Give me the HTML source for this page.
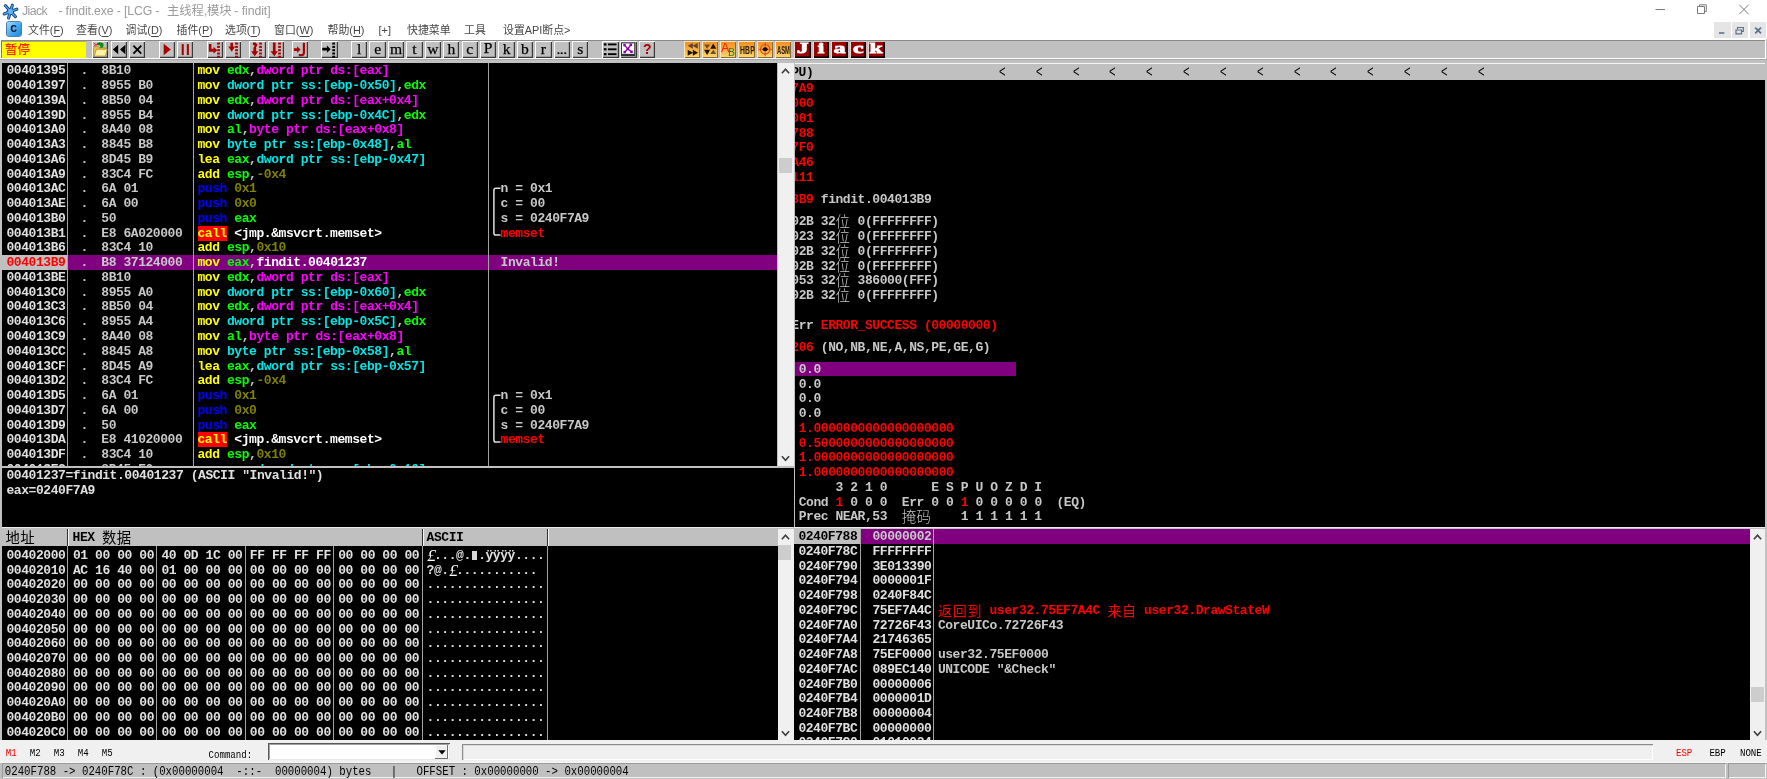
<!DOCTYPE html><html><head><meta charset="utf-8"><title>Jiack - findit.exe</title><style>
html,body{margin:0;padding:0}
body{width:1767px;height:779px;overflow:hidden;position:relative;background:#c0c0c0;font-family:"Liberation Sans","Noto Sans CJK SC",sans-serif}
.abs{position:absolute}
.m{position:absolute;white-space:pre;font:bold 13.0px/14.732px "Liberation Mono","Noto Sans CJK SC",monospace;letter-spacing:-0.4353px;height:14.732px;color:#e0e0e0;margin-top:1px}
.cj{font-family:"Noto Sans CJK SC",sans-serif;font-weight:300;font-size:14.4px;letter-spacing:0;display:inline-block;width:14.732px;text-align:center;line-height:14.732px;vertical-align:top;position:relative;top:-1.2px;text-indent:-0.5px}
.K .cj,.R .cj{font-weight:400}
.pane{position:absolute;background:#000;overflow:hidden}
.vl{position:absolute;width:1.2px;background:#a4a4a4}
.Y{color:#ffff00}.G{color:#00ff00}.M{color:#ff00ff}.C{color:#00e6e6}.B{color:#0000ff}.O{color:#808000}.W{color:#ffffff}.R{color:#ff0000}.L{color:#c8c8c8}.K{color:#000}
.call{background:#ff0000;color:#ffff00}
.sb{position:absolute;background:#f0f0f0}
.thumb{position:absolute;background:#cdcdcd}
.btn{position:absolute;top:41.2px;height:16.6px;width:16.4px;background:#c0c0c0;box-shadow:inset 1px 1px 0 #fbfbfb,inset -1.2px -1.2px 0 #383838;overflow:hidden}
.btn svg{position:absolute;left:0;top:0}
.lb{font:15.6px/16.5px "Liberation Serif",serif;-webkit-text-stroke:0.25px #000;color:#000;text-align:center}
.menu{position:absolute;top:21px;height:19px;line-height:19px;font-size:10.9px;color:#474747;white-space:pre}
.menu u{text-decoration:underline;text-underline-offset:1.5px;text-decoration-thickness:0.8px}
.hdr{position:absolute;background:#c0c0c0;overflow:hidden}
.pd{display:inline-block;width:7.366px;font:italic 400 17.5px/13.4px "Liberation Serif",serif;text-indent:0.6px;letter-spacing:0;vertical-align:top;color:#fff}
.blk{display:inline-block;width:4.6px;height:8.6px;margin:2.4px 1.4px 0 1.366px;background:#d8d8d8;vertical-align:top}
.st{position:absolute;white-space:pre;font:10.73px/17px "Liberation Mono",monospace;color:#000;transform:scaleY(1.27);transform-origin:0 0}
.sm{position:absolute;white-space:pre;font:9.1px/13px "Liberation Mono",monospace;transform:scaleY(1.25);transform-origin:0 0;letter-spacing:-0.02px}
</style></head><body><div id="app" style="will-change:transform;position:absolute;left:0;top:0;width:1767px;height:779px">
<div class="abs" style="left:0;top:0;width:1767px;height:38.5px;background:#fff"></div>
<svg class="abs" style="left:1.5px;top:1.5px" width="18" height="18" viewBox="0 0 18 18"><g stroke="#1b447e" stroke-width="3.1" stroke-linecap="round" fill="none"><path d="M8.4 9.4 L3.4 3.6"/><path d="M8.4 9.4 L10.4 3.2"/><path d="M8.4 9.4 L14.8 7.2"/><path d="M8.4 9.4 L2.2 12"/><path d="M8.4 9.4 L6.6 16"/><path d="M8.4 9.4 L13.4 14.6"/></g><circle cx="8.4" cy="9.4" r="3.7" fill="#1b447e"/><g stroke="#4c9fe6" stroke-width="1.4" stroke-linecap="round" fill="none"><path d="M8.4 9.4 L3.4 3.6"/><path d="M8.4 9.4 L10.4 3.2"/><path d="M8.4 9.4 L14.8 7.2"/><path d="M8.4 9.4 L2.2 12"/><path d="M8.4 9.4 L6.6 16"/><path d="M8.4 9.4 L13.4 14.6"/></g><circle cx="8.4" cy="9.4" r="2.6" fill="#5cb2f4"/></svg>
<div class="abs" style="left:22.1px;top:3px;height:17px;line-height:17px;font-size:12.3px;letter-spacing:-0.62px;color:#9b9b9b;white-space:pre">Jiack</div>
<div class="abs" style="left:58.4px;top:3px;height:17px;line-height:17px;font-size:12.3px;letter-spacing:-0.14px;color:#9b9b9b;white-space:pre">- findit.exe - [LCG -</div>
<div class="abs" style="left:167px;top:3px;height:17px;line-height:17px;font-size:12.3px;letter-spacing:0px;color:#9b9b9b;white-space:pre">主线程,</div>
<div class="abs" style="left:207px;top:3px;height:17px;line-height:17px;font-size:12.3px;letter-spacing:0px;color:#9b9b9b;white-space:pre">模块</div>
<div class="abs" style="left:234.3px;top:3px;height:17px;line-height:17px;font-size:12.3px;letter-spacing:-0.08px;color:#9b9b9b;white-space:pre">- findit]</div>
<svg class="abs" style="left:1640px;top:0" width="127" height="20" viewBox="0 0 127 20"><g stroke="#7a7a7a" stroke-width="1" fill="none"><path d="M15.5 9.5 H25"/><path d="M57.5 6.5 H64.5 V13.5 H57.5 Z"/><path d="M59.5 6.5 V4.8 H66.3 V11.5 H64.5"/><path d="M99.3 4.8 L108.6 14.2 M108.6 4.8 L99.3 14.2"/></g></svg>
<div class="abs" style="left:6.5px;top:22.3px;width:14.4px;height:14.2px;border-radius:2px;background:linear-gradient(135deg,#9adcff,#45a8ee 55%,#1f84d6);box-shadow:0 0 0 0.8px #1a5a96;"></div>
<div class="abs" style="left:6.5px;top:22.3px;width:14.4px;height:14.2px;text-align:center;font:bold 11.5px/14.5px 'Liberation Mono',monospace;color:#08152a">C</div>
<div class="menu" style="left:28px">文件(<u>F</u>)</div>
<div class="menu" style="left:76px">查看(<u>V</u>)</div>
<div class="menu" style="left:125.5px">调试(<u>D</u>)</div>
<div class="menu" style="left:176.5px">插件(<u>P</u>)</div>
<div class="menu" style="left:225px">选项(<u>T</u>)</div>
<div class="menu" style="left:274px">窗口(<u>W</u>)</div>
<div class="menu" style="left:327.5px">帮助(<u>H</u>)</div>
<div class="menu" style="left:378.5px">[+]</div>
<div class="menu" style="left:407px">快捷菜单</div>
<div class="menu" style="left:464px">工具</div>
<div class="menu" style="left:503px">设置API断点&gt;</div>
<div class="abs" style="left:1714.3px;top:22px;width:16.3px;height:16.3px;background:#e5e5e5"></div>
<div class="abs" style="left:1732.2px;top:22px;width:16.3px;height:16.3px;background:#e5e5e5"></div>
<div class="abs" style="left:1750px;top:22px;width:16.3px;height:16.3px;background:#e5e5e5"></div>
<svg class="abs" style="left:1714px;top:22px" width="53" height="17" viewBox="0 0 53 17"><g stroke="#5b6f8f" fill="none"><path d="M5 11 H10.3" stroke-width="1.6"/><path d="M23.5 7.2 V5.5 H29.3 V9.5 H27.5 M22 8 H27.5 V11.8 H22 Z" stroke-width="1.2"/><path d="M41.2 5.6 L47 11.4 M47 5.6 L41.2 11.4" stroke-width="1.7"/></g></svg>
<div class="abs" style="left:0;top:38.5px;width:1766px;height:20.5px;background:#c0c0c0;box-shadow:inset 0 1px 0 #fff, inset 0 -1px 0 #fff, inset -1px 0 0 #fff"></div>
<div class="abs" style="left:0;top:40px;width:1765px;height:1px;background:#8a8a8a"></div>
<div class="abs" style="left:0;top:59.3px;width:1767px;height:1px;background:#a8a8a8"></div>
<div class="abs" style="left:0;top:39px;width:1px;height:20px;background:#fff"></div>
<div class="abs" style="left:1.8px;top:41.4px;width:84px;height:16.9px;background:#ffff00;box-shadow:inset 0 1px 0 #b0b060,-1px 0 0 #77778a"></div>
<div class="abs" style="left:5px;top:41.4px;height:17px;line-height:16.5px;font-family:'Noto Sans CJK SC',sans-serif;font-size:12.4px;font-weight:500;color:#ff2000;white-space:pre">暂停</div>
<div class="btn " style="left:92.0px;"><svg width="16.4" height="16.6" viewBox="0 0 16 16" preserveAspectRatio="none"><path d="M1.5 7 L2.5 5.5 H6 L7 6.5 H13 V8 H4.5 L2.5 14 H1.5 Z" fill="#e8c050" stroke="#a88420" stroke-width="0.6"/><path d="M4.3 8 H15 L12.8 14.5 H2.2 Z" fill="#fff2a0" stroke="#b89028" stroke-width="0.7"/><path d="M4.5 3.5 C5 1 8 0.8 10 1.8 C12 2.6 11.5 5.5 10.3 6.6 L7.5 6.6 C9 5 8 4 6.5 4.2 Z" fill="#109010"/><path d="M1.5 1.8 L4.8 4.2 M1.8 4.8 L5 3.2" stroke="#ff2020" stroke-width="0.9"/><circle cx="7.2" cy="2.6" r="0.6" fill="#003000"/></svg></div>
<div class="btn " style="left:110.7px;"><svg width="16.4" height="16.6" viewBox="0 0 16 16" preserveAspectRatio="none"><path d="M1.8 8.2 L7 3.6 V12.8 Z M8.8 8.2 L14 3.6 V12.8 Z" fill="#000"/></svg></div>
<div class="btn " style="left:129.1px;"><svg width="16.4" height="16.6" viewBox="0 0 16 16" preserveAspectRatio="none"><path d="M4.3 4.4 L12 12.2 M12 4.4 L4.3 12.2" stroke="#000" stroke-width="1.8" fill="none"/></svg></div>
<div class="btn " style="left:158.7px;"><svg width="16.4" height="16.6" viewBox="0 0 16 16" preserveAspectRatio="none"><path d="M4.6 2.6 L11.5 8.2 L4.6 13.8 Z" fill="#aa0000"/></svg></div>
<div class="btn " style="left:177.1px;"><svg width="16.4" height="16.6" viewBox="0 0 16 16" preserveAspectRatio="none"><rect x="4.6" y="3" width="2" height="10.6" fill="#aa0000"/><rect x="9.6" y="3" width="2" height="10.6" fill="#aa0000"/></svg></div>
<div class="btn " style="left:207.0px;"><svg width="16.4" height="16.6" viewBox="0 0 16 16" preserveAspectRatio="none"><path d="M1.8 3 H4.3 V7.5 H6.4 V5.6 L10 8.9 L6.4 12.2 V10.3 H1.8 Z" fill="#aa0000"/><rect x="9.9" y="1.5" width="2.7" height="1.95" fill="#aa0000"/><rect x="9.9" y="4.7" width="2.7" height="1.95" fill="#aa0000"/><rect x="9.9" y="7.9" width="2.7" height="1.95" fill="#aa0000"/><rect x="9.9" y="11.1" width="2.7" height="1.95" fill="#aa0000"/><rect x="9.9" y="14.2" width="2.7" height="1.95" fill="#aa0000"/></svg></div>
<div class="btn " style="left:225.0px;"><svg width="16.4" height="16.6" viewBox="0 0 16 16" preserveAspectRatio="none"><path d="M5.3 1.6 H7.8 V5.4 H9.9 L6.55 10.3 L3.2 5.4 H5.3 Z" fill="#aa0000"/><rect x="9.9" y="1.5" width="2.7" height="1.95" fill="#aa0000"/><rect x="9.9" y="4.7" width="2.7" height="1.95" fill="#aa0000"/><rect x="9.9" y="7.9" width="2.7" height="1.95" fill="#aa0000"/><rect x="9.9" y="11.1" width="2.7" height="1.95" fill="#aa0000"/><rect x="9.9" y="14.2" width="2.7" height="1.95" fill="#aa0000"/></svg></div>
<div class="btn " style="left:249.2px;"><svg width="16.4" height="16.6" viewBox="0 0 16 16" preserveAspectRatio="none"><path d="M3.8 1.4 H6.4 L8.4 3.6 L6.6 6.6 H7 V9.8 H9.2 L5.6 14.6 L2 9.8 H4.3 V6.8 L5.5 4.4 L3.8 3.6 Z" fill="#aa0000"/><rect x="9.9" y="1.5" width="2.7" height="1.95" fill="#aa0000"/><rect x="9.9" y="4.7" width="2.7" height="1.95" fill="#aa0000"/><rect x="9.9" y="7.9" width="2.7" height="1.95" fill="#aa0000"/><rect x="9.9" y="11.1" width="2.7" height="1.95" fill="#aa0000"/><rect x="9.9" y="14.2" width="2.7" height="1.95" fill="#aa0000"/></svg></div>
<div class="btn " style="left:267.7px;"><svg width="16.4" height="16.6" viewBox="0 0 16 16" preserveAspectRatio="none"><path d="M4.8 1.4 H7.4 V10 H9.7 L6.1 14.8 L2.5 10 H4.8 Z" fill="#aa0000"/><rect x="9.9" y="1.5" width="2.7" height="1.95" fill="#aa0000"/><rect x="9.9" y="4.7" width="2.7" height="1.95" fill="#aa0000"/><rect x="9.9" y="7.9" width="2.7" height="1.95" fill="#aa0000"/><rect x="9.9" y="11.1" width="2.7" height="1.95" fill="#aa0000"/><rect x="9.9" y="14.2" width="2.7" height="1.95" fill="#aa0000"/></svg></div>
<div class="btn " style="left:291.9px;"><svg width="16.4" height="16.6" viewBox="0 0 16 16" preserveAspectRatio="none"><path d="M1.9 7 H5 V5 L8.4 8.3 L5 11.6 V9.6 H1.9 Z" fill="#aa0000"/><path d="M11.6 1.8 V11.4 Q11.6 13.7 9.4 13.7 H6.6" stroke="#aa0000" stroke-width="2.1" fill="none"/></svg></div>
<div class="btn " style="left:321.4px;"><svg width="16.4" height="16.6" viewBox="0 0 16 16" preserveAspectRatio="none"><path d="M1.2 6.6 H5.8 V4.4 L9.4 7.9 L5.8 11.4 V9.2 H1.2 Z" fill="#000"/><rect x="11" y="1.5" width="2.7" height="1.95" fill="#000"/><rect x="11" y="4.7" width="2.7" height="1.95" fill="#000"/><rect x="11" y="7.9" width="2.7" height="1.95" fill="#000"/><rect x="11" y="11.1" width="2.7" height="1.95" fill="#000"/><rect x="11" y="14.2" width="2.7" height="1.95" fill="#000"/></svg></div>
<div class="btn lb" style="left:351.0px;">l</div>
<div class="btn lb" style="left:369.42px;">e</div>
<div class="btn lb" style="left:387.84px;">m</div>
<div class="btn lb" style="left:406.26px;">t</div>
<div class="btn lb" style="left:424.68px;">w</div>
<div class="btn lb" style="left:443.1px;">h</div>
<div class="btn lb" style="left:461.52px;">c</div>
<div class="btn lb" style="left:479.94px;line-height:13.6px">P</div>
<div class="btn lb" style="left:498.36px;">k</div>
<div class="btn lb" style="left:516.78px;">b</div>
<div class="btn lb" style="left:535.2px;">r</div>
<div class="btn lb" style="left:553.62px;letter-spacing:-0.5px;text-indent:-0.5px">...</div>
<div class="btn lb" style="left:572.04px;">s</div>
<div class="btn " style="left:602.3px;"><svg width="16.4" height="16.6" viewBox="0 0 16 16" preserveAspectRatio="none"><rect x="1.8" y="2.2" width="2.6" height="2.2" fill="#000"/><rect x="5.8" y="2.4000000000000004" width="8.4" height="1.8" fill="#000"/><rect x="1.8" y="6.9" width="2.6" height="2.2" fill="#000"/><rect x="5.8" y="7.1000000000000005" width="8.4" height="1.8" fill="#000"/><rect x="1.8" y="11.6" width="2.6" height="2.2" fill="#000"/><rect x="5.8" y="11.799999999999999" width="8.4" height="1.8" fill="#000"/></svg></div>
<div class="btn " style="left:620.4px;"><svg width="16.4" height="16.6" viewBox="0 0 16 16" preserveAspectRatio="none"><rect x="1.4" y="1.8" width="13" height="12.2" fill="#fff" stroke="#303030" stroke-width="1"/><rect x="1.4" y="12.4" width="13" height="1.6" fill="#303030"/><path d="M4.4 4 L7.6 7.6 L4.6 10.8 M7.6 7.6 L11.4 10.6 M10.6 3.6 L7.6 7.6" stroke="#a000b0" stroke-width="1.3" fill="none"/><rect x="3.2" y="2.8" width="2.4" height="2.4" fill="#9000a8"/><rect x="9.4" y="2.4000000000000004" width="2.4" height="2.4" fill="#9000a8"/><rect x="6.3999999999999995" y="6.3999999999999995" width="2.4" height="2.4" fill="#9000a8"/><rect x="3.3999999999999995" y="9.4" width="2.4" height="2.4" fill="#9000a8"/><rect x="10.0" y="9.200000000000001" width="2.4" height="2.4" fill="#9000a8"/></svg></div>
<div class="btn " style="left:639.0px;font:bold 14px/16.6px 'Liberation Sans',sans-serif;color:#a80000;text-align:center">?</div>
<div class="btn " style="left:683.5px;background:linear-gradient(180deg,#f08c20 0%,#f7a838 40%,#ffd870 100%);box-shadow:inset 1px 1px 0 #ffe6b0,inset -1px -1px 0 #8a6a30"><svg width="16.4" height="16.6" viewBox="0 0 16 16" preserveAspectRatio="none"><path d="M8.6 2 L3.6 4.7 L8.6 7.4 Z M13.4 2 L8.4 4.7 L13.4 7.4 Z" fill="#5a4630"/><path d="M3.6 8.4 L8.8 11.3 L3.6 14.2 Z M8.6 8.4 L13.8 11.3 L8.6 14.2 Z" fill="#1c1408"/></svg></div>
<div class="btn " style="left:701.6px;background:linear-gradient(180deg,#f08c20 0%,#f7a838 40%,#ffd870 100%);box-shadow:inset 1px 1px 0 #ffe6b0,inset -1px -1px 0 #8a6a30"><svg width="16.4" height="16.6" viewBox="0 0 16 16" preserveAspectRatio="none"><path d="M2 3.4 L5 7.4 L8 3.4 Z" fill="#6a5030"/><path d="M2 8.4 L5 13.4 L8 8.4 Z" fill="#1c1408"/><path d="M8 7.4 L11 2.4 L14 7.4 Z" fill="#1c1408"/><path d="M8 12.6 L11 8.4 L14 12.6 Z" fill="#6a5030"/></svg></div>
<div class="btn " style="left:719.7px;background:linear-gradient(180deg,#f08c20 0%,#f7a838 40%,#ffd870 100%);box-shadow:inset 1px 1px 0 #ffe6b0,inset -1px -1px 0 #8a6a30"><span style="position:absolute;left:1.2px;top:0.6px;font:12.5px/13px 'Liberation Sans',sans-serif;color:#ff1a1a">A</span><span style="position:absolute;left:8.2px;top:5.2px;font:10.5px/12px 'Liberation Sans',sans-serif;color:#0a8a2a">B</span></div>
<div class="btn " style="left:738.4px;background:linear-gradient(180deg,#f08c20 0%,#f7a838 40%,#ffd870 100%);box-shadow:inset 1px 1px 0 #ffe6b0,inset -1px -1px 0 #8a6a30"><span style="position:absolute;left:1.3px;top:1.2px;font:bold 9.5px/13px 'Liberation Sans',sans-serif;color:#2a2210;transform:scale(0.72,1.15);transform-origin:0 0;letter-spacing:0.2px">HBP</span></div>
<div class="btn " style="left:756.5px;background:linear-gradient(180deg,#f08c20 0%,#f7a838 40%,#ffd870 100%);box-shadow:inset 1px 1px 0 #ffe6b0,inset -1px -1px 0 #8a6a30"><svg width="16.4" height="16.6" viewBox="0 0 16 16" preserveAspectRatio="none"><circle cx="8" cy="8" r="4.6" fill="none" stroke="#d8481c" stroke-width="1.1"/><path d="M8 1.2 V14.8 M1.2 8 H14.8" stroke="#d8481c" stroke-width="0.9"/><ellipse cx="8" cy="8" rx="2.5" ry="2" fill="#1a0c04"/></svg></div>
<div class="btn " style="left:775.0px;background:linear-gradient(180deg,#f08c20 0%,#f7a838 40%,#ffd870 100%);box-shadow:inset 1px 1px 0 #ffe6b0,inset -1px -1px 0 #8a6a30"><span style="position:absolute;left:1.6px;top:1.2px;font:bold 9.5px/13px 'Liberation Sans',sans-serif;color:#2a2210;transform:scale(0.61,1.15);transform-origin:0 0">ASM</span></div>
<div class="btn " style="left:794.4px;background:#9a0000;box-shadow:inset 0 1px 0 #c8c8c8,inset 1px 0 0 #e8d8d8,inset -1.6px -1.6px 0 #000;color:#fff;text-align:center;font:bold 14.5px/14.8px 'Liberation Serif',serif"><span style="display:inline-block;transform:scaleX(1.62);-webkit-text-stroke:0.8px #fff">J</span></div>
<div class="btn " style="left:812.85px;background:#9a0000;box-shadow:inset 0 1px 0 #c8c8c8,inset 1px 0 0 #e8d8d8,inset -1.6px -1.6px 0 #000;color:#fff;text-align:center;font:bold 14.5px/14.8px 'Liberation Serif',serif"><span style="display:inline-block;transform:scaleX(1.62);-webkit-text-stroke:0.8px #fff">i</span></div>
<div class="btn " style="left:831.3px;background:#9a0000;box-shadow:inset 0 1px 0 #c8c8c8,inset 1px 0 0 #e8d8d8,inset -1.6px -1.6px 0 #000;color:#fff;text-align:center;font:bold 14.5px/14.8px 'Liberation Serif',serif"><span style="display:inline-block;transform:scaleX(1.62);-webkit-text-stroke:0.8px #fff">a</span></div>
<div class="btn " style="left:849.75px;background:#9a0000;box-shadow:inset 0 1px 0 #c8c8c8,inset 1px 0 0 #e8d8d8,inset -1.6px -1.6px 0 #000;color:#fff;text-align:center;font:bold 14.5px/14.8px 'Liberation Serif',serif"><span style="display:inline-block;transform:scaleX(1.62);-webkit-text-stroke:0.8px #fff">c</span></div>
<div class="btn " style="left:868.2px;background:#9a0000;box-shadow:inset 0 1px 0 #c8c8c8,inset 1px 0 0 #e8d8d8,inset -1.6px -1.6px 0 #000;color:#fff;text-align:center;font:bold 14.5px/14.8px 'Liberation Serif',serif"><span style="display:inline-block;transform:scaleX(1.62);-webkit-text-stroke:0.8px #fff">k</span></div>
<div class="pane" style="left:2px;top:62.5px;width:775.2px;height:403.4px">
<div class="m " style="left:4.50px;top:0.75px">00401395</div>
<div class="m L" style="left:78.60px;top:0.75px">.</div>
<div class="m L" style="left:99.30px;top:0.75px">8B10</div>
<div class="m" style="left:195.50px;top:0.75px"><span class="Y">mov</span> <span class="G">edx</span><span class="L">,</span><span class="M">dword ptr ds:[eax]</span></div>
<div class="m " style="left:4.50px;top:15.52px">00401397</div>
<div class="m L" style="left:78.60px;top:15.52px">.</div>
<div class="m L" style="left:99.30px;top:15.52px">8955 B0</div>
<div class="m" style="left:195.50px;top:15.52px"><span class="Y">mov</span> <span class="C">dword ptr ss:[ebp-0x50]</span><span class="L">,</span><span class="G">edx</span></div>
<div class="m " style="left:4.50px;top:30.28px">0040139A</div>
<div class="m L" style="left:78.60px;top:30.28px">.</div>
<div class="m L" style="left:99.30px;top:30.28px">8B50 04</div>
<div class="m" style="left:195.50px;top:30.28px"><span class="Y">mov</span> <span class="G">edx</span><span class="L">,</span><span class="M">dword ptr ds:[eax+0x4]</span></div>
<div class="m " style="left:4.50px;top:45.05px">0040139D</div>
<div class="m L" style="left:78.60px;top:45.05px">.</div>
<div class="m L" style="left:99.30px;top:45.05px">8955 B4</div>
<div class="m" style="left:195.50px;top:45.05px"><span class="Y">mov</span> <span class="C">dword ptr ss:[ebp-0x4C]</span><span class="L">,</span><span class="G">edx</span></div>
<div class="m " style="left:4.50px;top:59.81px">004013A0</div>
<div class="m L" style="left:78.60px;top:59.81px">.</div>
<div class="m L" style="left:99.30px;top:59.81px">8A40 08</div>
<div class="m" style="left:195.50px;top:59.81px"><span class="Y">mov</span> <span class="G">al</span><span class="L">,</span><span class="M">byte ptr ds:[eax+0x8]</span></div>
<div class="m " style="left:4.50px;top:74.58px">004013A3</div>
<div class="m L" style="left:78.60px;top:74.58px">.</div>
<div class="m L" style="left:99.30px;top:74.58px">8845 B8</div>
<div class="m" style="left:195.50px;top:74.58px"><span class="Y">mov</span> <span class="C">byte ptr ss:[ebp-0x48]</span><span class="L">,</span><span class="G">al</span></div>
<div class="m " style="left:4.50px;top:89.34px">004013A6</div>
<div class="m L" style="left:78.60px;top:89.34px">.</div>
<div class="m L" style="left:99.30px;top:89.34px">8D45 B9</div>
<div class="m" style="left:195.50px;top:89.34px"><span class="Y">lea</span> <span class="G">eax</span><span class="L">,</span><span class="C">dword ptr ss:[ebp-0x47]</span></div>
<div class="m " style="left:4.50px;top:104.11px">004013A9</div>
<div class="m L" style="left:78.60px;top:104.11px">.</div>
<div class="m L" style="left:99.30px;top:104.11px">83C4 FC</div>
<div class="m" style="left:195.50px;top:104.11px"><span class="Y">add</span> <span class="G">esp</span><span class="L">,</span><span class="O">-0x4</span></div>
<div class="m " style="left:4.50px;top:118.87px">004013AC</div>
<div class="m L" style="left:78.60px;top:118.87px">.</div>
<div class="m L" style="left:99.30px;top:118.87px">6A 01</div>
<div class="m" style="left:195.50px;top:118.87px"><span class="B">push</span> <span class="O">0x1</span></div>
<div class="m" style="left:498.60px;top:118.87px"><span class="L">n = 0x1</span></div>
<div class="m " style="left:4.50px;top:133.63px">004013AE</div>
<div class="m L" style="left:78.60px;top:133.63px">.</div>
<div class="m L" style="left:99.30px;top:133.63px">6A 00</div>
<div class="m" style="left:195.50px;top:133.63px"><span class="B">push</span> <span class="O">0x0</span></div>
<div class="m" style="left:498.60px;top:133.63px"><span class="L">c = 00</span></div>
<div class="m " style="left:4.50px;top:148.40px">004013B0</div>
<div class="m L" style="left:78.60px;top:148.40px">.</div>
<div class="m L" style="left:99.30px;top:148.40px">50</div>
<div class="m" style="left:195.50px;top:148.40px"><span class="B">push</span> <span class="G">eax</span></div>
<div class="m" style="left:498.60px;top:148.40px"><span class="L">s = 0240F7A9</span></div>
<div class="m " style="left:4.50px;top:163.17px">004013B1</div>
<div class="m L" style="left:78.60px;top:163.17px">.</div>
<div class="m L" style="left:99.30px;top:163.17px">E8 6A020000</div>
<div class="m" style="left:195.50px;top:163.17px"><span class="call">call</span> <span class="W">&lt;jmp.&amp;msvcrt.memset&gt;</span></div>
<div class="m" style="left:498.60px;top:163.17px"><span class="R">memset</span></div>
<div class="m " style="left:4.50px;top:177.93px">004013B6</div>
<div class="m L" style="left:78.60px;top:177.93px">.</div>
<div class="m L" style="left:99.30px;top:177.93px">83C4 10</div>
<div class="m" style="left:195.50px;top:177.93px"><span class="Y">add</span> <span class="G">esp</span><span class="L">,</span><span class="O">0x10</span></div>
<div class="abs" style="left:-2px;top:192.69px;width:67.3px;height:14.732px;background:#c0c0c0"></div>
<div class="abs" style="left:65.8px;top:192.69px;width:775.2px;height:14.732px;background:#800080"></div>
<div class="m R" style="left:4.50px;top:192.69px">004013B9</div>
<div class="m L" style="left:78.60px;top:192.69px">.</div>
<div class="m L" style="left:99.30px;top:192.69px">B8 37124000</div>
<div class="m" style="left:195.50px;top:192.69px"><span class="Y">mov</span> <span class="G">eax</span><span class="L">,</span><span class="W">findit.00401237</span></div>
<div class="m" style="left:498.60px;top:192.69px"><span class="L">Invalid!</span></div>
<div class="m " style="left:4.50px;top:207.46px">004013BE</div>
<div class="m L" style="left:78.60px;top:207.46px">.</div>
<div class="m L" style="left:99.30px;top:207.46px">8B10</div>
<div class="m" style="left:195.50px;top:207.46px"><span class="Y">mov</span> <span class="G">edx</span><span class="L">,</span><span class="M">dword ptr ds:[eax]</span></div>
<div class="m " style="left:4.50px;top:222.23px">004013C0</div>
<div class="m L" style="left:78.60px;top:222.23px">.</div>
<div class="m L" style="left:99.30px;top:222.23px">8955 A0</div>
<div class="m" style="left:195.50px;top:222.23px"><span class="Y">mov</span> <span class="C">dword ptr ss:[ebp-0x60]</span><span class="L">,</span><span class="G">edx</span></div>
<div class="m " style="left:4.50px;top:236.99px">004013C3</div>
<div class="m L" style="left:78.60px;top:236.99px">.</div>
<div class="m L" style="left:99.30px;top:236.99px">8B50 04</div>
<div class="m" style="left:195.50px;top:236.99px"><span class="Y">mov</span> <span class="G">edx</span><span class="L">,</span><span class="M">dword ptr ds:[eax+0x4]</span></div>
<div class="m " style="left:4.50px;top:251.75px">004013C6</div>
<div class="m L" style="left:78.60px;top:251.75px">.</div>
<div class="m L" style="left:99.30px;top:251.75px">8955 A4</div>
<div class="m" style="left:195.50px;top:251.75px"><span class="Y">mov</span> <span class="C">dword ptr ss:[ebp-0x5C]</span><span class="L">,</span><span class="G">edx</span></div>
<div class="m " style="left:4.50px;top:266.52px">004013C9</div>
<div class="m L" style="left:78.60px;top:266.52px">.</div>
<div class="m L" style="left:99.30px;top:266.52px">8A40 08</div>
<div class="m" style="left:195.50px;top:266.52px"><span class="Y">mov</span> <span class="G">al</span><span class="L">,</span><span class="M">byte ptr ds:[eax+0x8]</span></div>
<div class="m " style="left:4.50px;top:281.29px">004013CC</div>
<div class="m L" style="left:78.60px;top:281.29px">.</div>
<div class="m L" style="left:99.30px;top:281.29px">8845 A8</div>
<div class="m" style="left:195.50px;top:281.29px"><span class="Y">mov</span> <span class="C">byte ptr ss:[ebp-0x58]</span><span class="L">,</span><span class="G">al</span></div>
<div class="m " style="left:4.50px;top:296.05px">004013CF</div>
<div class="m L" style="left:78.60px;top:296.05px">.</div>
<div class="m L" style="left:99.30px;top:296.05px">8D45 A9</div>
<div class="m" style="left:195.50px;top:296.05px"><span class="Y">lea</span> <span class="G">eax</span><span class="L">,</span><span class="C">dword ptr ss:[ebp-0x57]</span></div>
<div class="m " style="left:4.50px;top:310.81px">004013D2</div>
<div class="m L" style="left:78.60px;top:310.81px">.</div>
<div class="m L" style="left:99.30px;top:310.81px">83C4 FC</div>
<div class="m" style="left:195.50px;top:310.81px"><span class="Y">add</span> <span class="G">esp</span><span class="L">,</span><span class="O">-0x4</span></div>
<div class="m " style="left:4.50px;top:325.58px">004013D5</div>
<div class="m L" style="left:78.60px;top:325.58px">.</div>
<div class="m L" style="left:99.30px;top:325.58px">6A 01</div>
<div class="m" style="left:195.50px;top:325.58px"><span class="B">push</span> <span class="O">0x1</span></div>
<div class="m" style="left:498.60px;top:325.58px"><span class="L">n = 0x1</span></div>
<div class="m " style="left:4.50px;top:340.35px">004013D7</div>
<div class="m L" style="left:78.60px;top:340.35px">.</div>
<div class="m L" style="left:99.30px;top:340.35px">6A 00</div>
<div class="m" style="left:195.50px;top:340.35px"><span class="B">push</span> <span class="O">0x0</span></div>
<div class="m" style="left:498.60px;top:340.35px"><span class="L">c = 00</span></div>
<div class="m " style="left:4.50px;top:355.11px">004013D9</div>
<div class="m L" style="left:78.60px;top:355.11px">.</div>
<div class="m L" style="left:99.30px;top:355.11px">50</div>
<div class="m" style="left:195.50px;top:355.11px"><span class="B">push</span> <span class="G">eax</span></div>
<div class="m" style="left:498.60px;top:355.11px"><span class="L">s = 0240F7A9</span></div>
<div class="m " style="left:4.50px;top:369.88px">004013DA</div>
<div class="m L" style="left:78.60px;top:369.88px">.</div>
<div class="m L" style="left:99.30px;top:369.88px">E8 41020000</div>
<div class="m" style="left:195.50px;top:369.88px"><span class="call">call</span> <span class="W">&lt;jmp.&amp;msvcrt.memset&gt;</span></div>
<div class="m" style="left:498.60px;top:369.88px"><span class="R">memset</span></div>
<div class="m " style="left:4.50px;top:384.64px">004013DF</div>
<div class="m L" style="left:78.60px;top:384.64px">.</div>
<div class="m L" style="left:99.30px;top:384.64px">83C4 10</div>
<div class="m" style="left:195.50px;top:384.64px"><span class="Y">add</span> <span class="G">esp</span><span class="L">,</span><span class="O">0x10</span></div>
<div class="m " style="left:4.50px;top:399.41px">004013E2</div>
<div class="m L" style="left:78.60px;top:399.41px">.</div>
<div class="m L" style="left:99.30px;top:399.41px">8B45 E0</div>
<div class="m" style="left:195.50px;top:399.41px"><span class="Y">mov</span> <span class="G">eax</span><span class="L">,</span><span class="C">dword ptr ss:[ebp-0x10]</span></div>
<div class="vl" style="left:65.1px;top:0;height:403.4px"></div>
<div class="vl" style="left:191.1px;top:0;height:403.4px"></div>
<div class="vl" style="left:486.2px;top:0;height:403.4px"></div>
<svg class="abs" style="left:489px;top:123.67px" width="12" height="51.10" viewBox="0 0 12 51.10"><path d="M9.5 2.2 H5 Q2.9 2.2 2.9 4.4 V46.90 Q2.9 49.10 5 49.10 H9.5" stroke="#e0e0e0" stroke-width="1.5" fill="none"/></svg>
<svg class="abs" style="left:489px;top:330.38px" width="12" height="51.09" viewBox="0 0 12 51.09"><path d="M9.5 2.2 H5 Q2.9 2.2 2.9 4.4 V46.89 Q2.9 49.09 5 49.09 H9.5" stroke="#e0e0e0" stroke-width="1.5" fill="none"/></svg>
</div>
<div class="sb" style="left:777.5px;top:62.5px;width:16px;height:403.5px"></div>
<div class="thumb" style="left:779.2px;top:157.7px;width:13px;height:15.2px"></div>
<svg class="abs" style="left:780.8px;top:67px" width="9" height="8.4" viewBox="0 0 9 8.4"><path d="M0.9 6.2 L4.5 2.2 L8.1 6.2" stroke="#404040" stroke-width="1.7" fill="none"/></svg>
<svg class="abs" style="left:780.8px;top:454.2px" width="9" height="8.4" viewBox="0 0 9 8.4"><path d="M0.9 2.2 L4.5 6.2 L8.1 2.2" stroke="#404040" stroke-width="1.7" fill="none"/></svg>
<div class="pane" style="left:2px;top:468px;width:791.5px;height:59px">
<div class="m" style="left:4.5px;top:0.2px">00401237=findit.00401237 (ASCII "Invalid!")</div>
<div class="m" style="left:4.5px;top:14.93px">eax=0240F7A9</div>
</div>
<div class="hdr" style="left:2px;top:528.5px;width:775.5px;height:17.8px">
<div class="m K" style="left:3.6px;top:1.6px"><span class="cj" style="">地</span><span class="cj" style="">址</span></div>
<div class="m K" style="left:70.6px;top:1.6px">HEX <span class="cj" style="">数</span><span class="cj" style="">据</span></div>
<div class="m K" style="left:424.6px;top:1.6px">ASCII</div>
<div class="abs" style="left:64.9px;top:0;width:1.2px;height:18px;background:#303030"></div>
<div class="abs" style="left:66.1px;top:0;width:1px;height:18px;background:#f4f4f4"></div>
<div class="abs" style="left:419.9px;top:0;width:1.2px;height:18px;background:#303030"></div>
<div class="abs" style="left:421.1px;top:0;width:1px;height:18px;background:#f4f4f4"></div>
<div class="abs" style="left:544.9px;top:0;width:1.2px;height:18px;background:#303030"></div>
<div class="abs" style="left:546.1px;top:0;width:1px;height:18px;background:#f4f4f4"></div>
</div>
<div class="abs" style="left:2px;top:527.3px;width:791px;height:1.2px;background:#ececec"></div>
<div class="pane" style="left:2px;top:546.3px;width:775.5px;height:193.70000000000005px">
<div class="m" style="left:4.5px;top:1.60px">00402000</div>
<div class="m" style="left:71px;top:1.60px">01 00 00 00 40 0D 1C 00 FF FF FF FF 00 00 00 00</div>
<div class="m" style="left:424.6px;top:1.60px"><span class="pd">£</span>...@.<span class="blk"></span>.ÿÿÿÿ....</div>
<div class="m" style="left:4.5px;top:16.33px">00402010</div>
<div class="m" style="left:71px;top:16.33px">AC 16 40 00 01 00 00 00 00 00 00 00 00 00 00 00</div>
<div class="m" style="left:424.6px;top:16.33px">?@.<span class="pd">£</span>...........</div>
<div class="m" style="left:4.5px;top:31.06px">00402020</div>
<div class="m" style="left:71px;top:31.06px">00 00 00 00 00 00 00 00 00 00 00 00 00 00 00 00</div>
<div class="m" style="left:424.6px;top:31.06px">................</div>
<div class="m" style="left:4.5px;top:45.80px">00402030</div>
<div class="m" style="left:71px;top:45.80px">00 00 00 00 00 00 00 00 00 00 00 00 00 00 00 00</div>
<div class="m" style="left:424.6px;top:45.80px">................</div>
<div class="m" style="left:4.5px;top:60.53px">00402040</div>
<div class="m" style="left:71px;top:60.53px">00 00 00 00 00 00 00 00 00 00 00 00 00 00 00 00</div>
<div class="m" style="left:424.6px;top:60.53px">................</div>
<div class="m" style="left:4.5px;top:75.26px">00402050</div>
<div class="m" style="left:71px;top:75.26px">00 00 00 00 00 00 00 00 00 00 00 00 00 00 00 00</div>
<div class="m" style="left:424.6px;top:75.26px">................</div>
<div class="m" style="left:4.5px;top:89.99px">00402060</div>
<div class="m" style="left:71px;top:89.99px">00 00 00 00 00 00 00 00 00 00 00 00 00 00 00 00</div>
<div class="m" style="left:424.6px;top:89.99px">................</div>
<div class="m" style="left:4.5px;top:104.72px">00402070</div>
<div class="m" style="left:71px;top:104.72px">00 00 00 00 00 00 00 00 00 00 00 00 00 00 00 00</div>
<div class="m" style="left:424.6px;top:104.72px">................</div>
<div class="m" style="left:4.5px;top:119.46px">00402080</div>
<div class="m" style="left:71px;top:119.46px">00 00 00 00 00 00 00 00 00 00 00 00 00 00 00 00</div>
<div class="m" style="left:424.6px;top:119.46px">................</div>
<div class="m" style="left:4.5px;top:134.19px">00402090</div>
<div class="m" style="left:71px;top:134.19px">00 00 00 00 00 00 00 00 00 00 00 00 00 00 00 00</div>
<div class="m" style="left:424.6px;top:134.19px">................</div>
<div class="m" style="left:4.5px;top:148.92px">004020A0</div>
<div class="m" style="left:71px;top:148.92px">00 00 00 00 00 00 00 00 00 00 00 00 00 00 00 00</div>
<div class="m" style="left:424.6px;top:148.92px">................</div>
<div class="m" style="left:4.5px;top:163.65px">004020B0</div>
<div class="m" style="left:71px;top:163.65px">00 00 00 00 00 00 00 00 00 00 00 00 00 00 00 00</div>
<div class="m" style="left:424.6px;top:163.65px">................</div>
<div class="m" style="left:4.5px;top:178.38px">004020C0</div>
<div class="m" style="left:71px;top:178.38px">00 00 00 00 00 00 00 00 00 00 00 00 00 00 00 00</div>
<div class="m" style="left:424.6px;top:178.38px">................</div>
<div class="m" style="left:4.5px;top:193.12px">004020D0</div>
<div class="m" style="left:71px;top:193.12px">00 00 00 00 00 00 00 00 00 00 00 00 00 00 00 00</div>
<div class="m" style="left:424.6px;top:193.12px">................</div>
<div class="vl" style="left:65.1px;top:0;height:200px"></div>
<div class="vl" style="left:154.1px;top:0;height:200px"></div>
<div class="vl" style="left:242.5px;top:0;height:200px"></div>
<div class="vl" style="left:330.9px;top:0;height:200px"></div>
<div class="vl" style="left:420.1px;top:0;height:200px"></div>
<div class="vl" style="left:545.1px;top:0;height:200px"></div>
</div>
<div class="sb" style="left:777.5px;top:528.5px;width:16px;height:211.5px"></div>
<div class="thumb" style="left:778.4px;top:545px;width:13px;height:14.8px"></div>
<svg class="abs" style="left:780.8px;top:533.1px" width="9" height="8.4" viewBox="0 0 9 8.4"><path d="M0.9 6.2 L4.5 2.2 L8.1 6.2" stroke="#404040" stroke-width="1.7" fill="none"/></svg>
<svg class="abs" style="left:780.8px;top:728.8px" width="9" height="8.4" viewBox="0 0 9 8.4"><path d="M0.9 2.2 L4.5 6.2 L8.1 2.2" stroke="#404040" stroke-width="1.7" fill="none"/></svg>
<div class="abs" style="left:794.8px;top:62.6px;width:970.2px;height:1.2px;background:#f4f4f4"></div>
<div class="hdr" style="left:794.8px;top:63.8px;width:970.2px;height:15.8px">
<div class="m K" style="left:-69.80px;top:1.2px"><span class="cj" style="">寄</span><span class="cj" style="">存</span><span class="cj" style="">器</span> (FPU)</div>
<div class="abs K" style="left:204.14px;top:0.2px;width:9px;font:13px/16px 'Liberation Sans',sans-serif;color:#000;transform:scale(0.86,1.34);transform-origin:0 50%">&lt;</div>
<div class="abs K" style="left:240.97px;top:0.2px;width:9px;font:13px/16px 'Liberation Sans',sans-serif;color:#000;transform:scale(0.86,1.34);transform-origin:0 50%">&lt;</div>
<div class="abs K" style="left:277.80px;top:0.2px;width:9px;font:13px/16px 'Liberation Sans',sans-serif;color:#000;transform:scale(0.86,1.34);transform-origin:0 50%">&lt;</div>
<div class="abs K" style="left:314.63px;top:0.2px;width:9px;font:13px/16px 'Liberation Sans',sans-serif;color:#000;transform:scale(0.86,1.34);transform-origin:0 50%">&lt;</div>
<div class="abs K" style="left:351.46px;top:0.2px;width:9px;font:13px/16px 'Liberation Sans',sans-serif;color:#000;transform:scale(0.86,1.34);transform-origin:0 50%">&lt;</div>
<div class="abs K" style="left:388.29px;top:0.2px;width:9px;font:13px/16px 'Liberation Sans',sans-serif;color:#000;transform:scale(0.86,1.34);transform-origin:0 50%">&lt;</div>
<div class="abs K" style="left:425.12px;top:0.2px;width:9px;font:13px/16px 'Liberation Sans',sans-serif;color:#000;transform:scale(0.86,1.34);transform-origin:0 50%">&lt;</div>
<div class="abs K" style="left:461.95px;top:0.2px;width:9px;font:13px/16px 'Liberation Sans',sans-serif;color:#000;transform:scale(0.86,1.34);transform-origin:0 50%">&lt;</div>
<div class="abs K" style="left:498.78px;top:0.2px;width:9px;font:13px/16px 'Liberation Sans',sans-serif;color:#000;transform:scale(0.86,1.34);transform-origin:0 50%">&lt;</div>
<div class="abs K" style="left:535.61px;top:0.2px;width:9px;font:13px/16px 'Liberation Sans',sans-serif;color:#000;transform:scale(0.86,1.34);transform-origin:0 50%">&lt;</div>
<div class="abs K" style="left:572.44px;top:0.2px;width:9px;font:13px/16px 'Liberation Sans',sans-serif;color:#000;transform:scale(0.86,1.34);transform-origin:0 50%">&lt;</div>
<div class="abs K" style="left:609.27px;top:0.2px;width:9px;font:13px/16px 'Liberation Sans',sans-serif;color:#000;transform:scale(0.86,1.34);transform-origin:0 50%">&lt;</div>
<div class="abs K" style="left:646.10px;top:0.2px;width:9px;font:13px/16px 'Liberation Sans',sans-serif;color:#000;transform:scale(0.86,1.34);transform-origin:0 50%">&lt;</div>
<div class="abs K" style="left:682.93px;top:0.2px;width:9px;font:13px/16px 'Liberation Sans',sans-serif;color:#000;transform:scale(0.86,1.34);transform-origin:0 50%">&lt;</div>
</div>
<div class="pane" style="left:794.8px;top:79.6px;width:970.2px;height:447.19999999999993px">
<div class="m L" style="left:-69.80px;top:1.85px">EAX <span class="R">0240F7A9</span></div>
<div class="m L" style="left:-69.80px;top:16.61px">ECX <span class="R">00000000</span></div>
<div class="m L" style="left:-69.80px;top:31.36px">EDX <span class="R">00000001</span></div>
<div class="m L" style="left:-69.80px;top:46.12px">EBX <span class="R">0240F788</span></div>
<div class="m L" style="left:-69.80px;top:60.87px">ESP <span class="R">0240F7F0</span></div>
<div class="m L" style="left:-69.80px;top:75.63px">EBP <span class="R">0240FA46</span></div>
<div class="m L" style="left:-69.80px;top:90.38px">ESI <span class="R">00000111</span></div>
<div class="m L" style="left:-69.80px;top:112.51px">EIP <span class="R">004013B9</span> findit.004013B9</div>
<div class="m L" style="left:-69.80px;top:134.65px">C 0  ES 002B 32<span class="cj" style="">位</span> 0(FFFFFFFF)</div>
<div class="m L" style="left:-69.80px;top:149.40px">P 1  CS 0023 32<span class="cj" style="">位</span> 0(FFFFFFFF)</div>
<div class="m L" style="left:-69.80px;top:164.16px">A 0  SS 002B 32<span class="cj" style="">位</span> 0(FFFFFFFF)</div>
<div class="m L" style="left:-69.80px;top:178.91px">Z 0  DS 002B 32<span class="cj" style="">位</span> 0(FFFFFFFF)</div>
<div class="m L" style="left:-69.80px;top:193.66px">S 0  FS 0053 32<span class="cj" style="">位</span> 386000(FFF)</div>
<div class="m L" style="left:-69.80px;top:208.42px">T 0  GS 002B 32<span class="cj" style="">位</span> 0(FFFFFFFF)</div>
<div class="m L" style="left:-69.80px;top:237.93px">O 0  LastErr <span class="R">ERROR_SUCCESS (00000000)</span></div>
<div class="m L" style="left:-69.80px;top:260.06px">EFL <span class="R">00000206</span> (NO,NB,NE,A,NS,PE,GE,G)</div>
<div class="abs" style="left:0;top:282.05px;width:221.5px;height:14.732px;background:#800080"></div>
<div class="m L" style="left:-69.80px;top:282.20px">ST0 empty 0.0</div>
<div class="m L" style="left:-69.80px;top:296.95px">ST1 empty 0.0</div>
<div class="m L" style="left:-69.80px;top:311.71px">ST2 empty 0.0</div>
<div class="m L" style="left:-69.80px;top:326.46px">ST3 empty 0.0</div>
<div class="m L" style="left:-69.80px;top:341.22px">ST4 empty <span class="R">1.0000000000000000000</span></div>
<div class="m L" style="left:-69.80px;top:355.97px">ST5 empty <span class="R">0.5000000000000000000</span></div>
<div class="m L" style="left:-69.80px;top:370.73px">ST6 empty <span class="R">1.0000000000000000000</span></div>
<div class="m L" style="left:-69.80px;top:385.48px">ST7 empty <span class="R">1.0000000000000000000</span></div>
<div class="m L" style="left:-69.80px;top:400.24px">               3 2 1 0      E S P U O Z D I</div>
<div class="m L" style="left:-69.80px;top:414.99px">FST 4020  Cond <span class="R">1</span> 0 0 0  Err 0 0 <span class="R">1</span> 0 0 0 0 0  (EQ)</div>
<div class="m L" style="left:-69.80px;top:429.75px">FCW 027F  Prec NEAR,53  <span class="cj" style="">掩</span><span class="cj" style="">码</span>    1 1 1 1 1 1</div>
</div>
<div class="abs" style="left:794.0px;top:527.3px;width:971.0px;height:1.2px;background:#ececec"></div>
<div class="pane" style="left:794.0px;top:528.5px;width:955.8px;height:211.5px">
<div class="abs" style="left:0;top:0;width:66.0px;height:15.43px;background:#c0c0c0"></div>
<div class="abs" style="left:66.5px;top:0;width:1000px;height:15.43px;background:#800080"></div>
<div class="m K" style="left:4.40px;top:0.70px">0240F788</div>
<div class="m L" style="left:78.50px;top:0.70px">00000002</div>
<div class="m " style="left:4.40px;top:15.43px">0240F78C</div>
<div class="m " style="left:78.50px;top:15.43px">FFFFFFFF</div>
<div class="m " style="left:4.40px;top:30.16px">0240F790</div>
<div class="m " style="left:78.50px;top:30.16px">3E013390</div>
<div class="m " style="left:4.40px;top:44.90px">0240F794</div>
<div class="m " style="left:78.50px;top:44.90px">0000001F</div>
<div class="m " style="left:4.40px;top:59.63px">0240F798</div>
<div class="m " style="left:78.50px;top:59.63px">0240F84C</div>
<div class="m " style="left:4.40px;top:74.36px">0240F79C</div>
<div class="m " style="left:78.50px;top:74.36px">75EF7A4C</div>
<div class="m L" style="left:143.90px;top:74.36px"><span class="R"><span class="cj" style="font-size:14px">返</span><span class="cj" style="font-size:14px">回</span><span class="cj" style="font-size:14px">到</span> user32.75EF7A4C <span class="cj" style="font-size:14px">来</span><span class="cj" style="font-size:14px">自</span> user32.DrawStateW</span></div>
<div class="m " style="left:4.40px;top:89.09px">0240F7A0</div>
<div class="m " style="left:78.50px;top:89.09px">72726F43</div>
<div class="m L" style="left:143.90px;top:89.09px">CoreUICo.72726F43</div>
<div class="m " style="left:4.40px;top:103.82px">0240F7A4</div>
<div class="m " style="left:78.50px;top:103.82px">21746365</div>
<div class="m " style="left:4.40px;top:118.56px">0240F7A8</div>
<div class="m " style="left:78.50px;top:118.56px">75EF0000</div>
<div class="m L" style="left:143.90px;top:118.56px">user32.75EF0000</div>
<div class="m " style="left:4.40px;top:133.29px">0240F7AC</div>
<div class="m " style="left:78.50px;top:133.29px">089EC140</div>
<div class="m L" style="left:143.90px;top:133.29px">UNICODE "&amp;Check"</div>
<div class="m " style="left:4.40px;top:148.02px">0240F7B0</div>
<div class="m " style="left:78.50px;top:148.02px">00000006</div>
<div class="m " style="left:4.40px;top:162.75px">0240F7B4</div>
<div class="m " style="left:78.50px;top:162.75px">0000001D</div>
<div class="m " style="left:4.40px;top:177.48px">0240F7B8</div>
<div class="m " style="left:78.50px;top:177.48px">00000004</div>
<div class="m " style="left:4.40px;top:192.22px">0240F7BC</div>
<div class="m " style="left:78.50px;top:192.22px">00000000</div>
<div class="m " style="left:4.40px;top:206.95px">0240F7C0</div>
<div class="m " style="left:78.50px;top:206.95px">01010024</div>
<div class="vl" style="left:65.7px;top:0;height:212px"></div>
<div class="vl" style="left:139.1px;top:0;height:212px"></div>
</div>
<div class="sb" style="left:1749.8px;top:528.5px;width:15.4px;height:211.5px"></div>
<div class="thumb" style="left:1751.3px;top:687.2px;width:12.8px;height:14.4px"></div>
<svg class="abs" style="left:1753px;top:533.1px" width="9" height="8.4" viewBox="0 0 9 8.4"><path d="M0.9 6.2 L4.5 2.2 L8.1 6.2" stroke="#404040" stroke-width="1.7" fill="none"/></svg>
<svg class="abs" style="left:1753px;top:728.8px" width="9" height="8.4" viewBox="0 0 9 8.4"><path d="M0.9 2.2 L4.5 6.2 L8.1 2.2" stroke="#404040" stroke-width="1.7" fill="none"/></svg>
<div class="abs" style="left:0;top:740px;width:1767px;height:22px;background:#f0f0f0"></div>
<div class="sm" style="left:5.8px;top:744.8px;color:#ff0000">M1</div>
<div class="sm" style="left:29.8px;top:744.8px;color:#000">M2</div>
<div class="sm" style="left:53.8px;top:744.8px;color:#000">M3</div>
<div class="sm" style="left:77.8px;top:744.8px;color:#000">M4</div>
<div class="sm" style="left:101.8px;top:744.8px;color:#000">M5</div>
<div class="sm" style="left:208.6px;top:747px;color:#000">Command:</div>
<div class="abs" style="left:267.5px;top:743px;width:182px;height:17px;background:#fff;box-shadow:inset 1px 1px 0 #5a5a5a, inset -1px -1px 0 #e8e8e8, inset 2px 2px 0 #a0a0a0"></div>
<div class="abs" style="left:434.5px;top:745px;width:13.5px;height:13.5px;background:#f0f0f0;box-shadow:inset -1px -1px 0 #707070, inset 1px 1px 0 #fff"></div>
<svg class="abs" style="left:437.5px;top:749.5px" width="8" height="5" viewBox="0 0 8 5"><path d="M0.3 0.3 H7.7 L4 4.6 Z" fill="#000"/></svg>
<div class="abs" style="left:461.5px;top:744.2px;width:1191px;height:15.6px;background:#f0f0f0;box-shadow:inset 1px 1px 0 #8c8c8c, inset 2px 2px 0 #d8d8d8, inset -1px -1px 0 #fff"></div>
<div class="sm" style="left:1676px;top:744.8px;color:#ff0000">ESP</div>
<div class="sm" style="left:1709.4px;top:744.8px;color:#000">EBP</div>
<div class="sm" style="left:1740px;top:744.8px;color:#000">NONE</div>
<div class="abs" style="left:0;top:762px;width:1767px;height:17px;background:#c0c0c0;box-shadow:inset 0 1px 0 #f8f8f8"></div>
<div class="abs" style="left:1.5px;top:763.3px;width:1724px;height:15.2px;box-shadow:inset 1px 1px 0 #9a9a9a, inset -1px -1px 0 #f4f4f4"></div>
<div class="abs" style="left:1727.5px;top:763.3px;width:38px;height:15.2px;box-shadow:inset 1px 1px 0 #9a9a9a, inset -1px -1px 0 #f4f4f4"></div>
<div class="st" style="left:4.8px;top:760.8px">0240F788 -&gt; 0240F78C : (0x00000004  -::-  00000004) bytes   |   OFFSET : 0x00000000 -&gt; 0x00000004</div>
</div></body></html>
